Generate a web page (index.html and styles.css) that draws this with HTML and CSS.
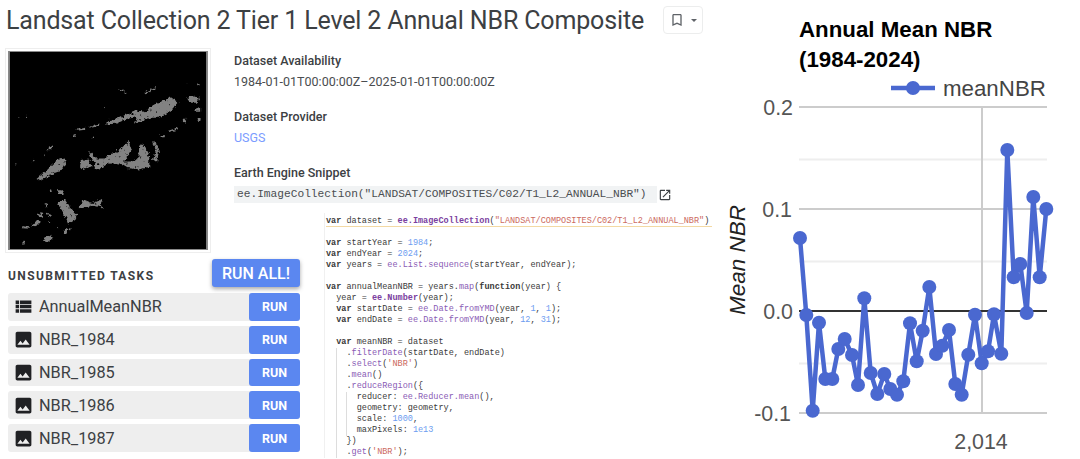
FILE: index.html
```html
<!DOCTYPE html>
<html lang="en">
<head>
    <meta charset="UTF-8">
    <title>Annual NBR Composite</title>
    <link rel="stylesheet" href="styles.css">
</head>
<body>
    <div class="page">
        <!-- Dataset side -->
        <main class="dataset">
            <header class="head">
                <h1>Landsat Collection 2 Tier 1 Level 2 Annual NBR Composite</h1>
                <button type="button" class="save">
                    <svg class="save-icon" viewBox="0 0 24 24"><path d="M17 3H7c-1.1 0-2 .9-2 2v16l7-3 7 3V5c0-1.1-.9-2-2-2zm0 15l-5-2.18L7 18V5h10v13z"/></svg>
                    <span class="caret"></span>
                </button>
            </header>

            <div class="body">
                <div class="thumb">
                    <svg viewBox="0 0 620 620" class="thumb-img">
                        <defs>
                            <filter id="soft" x="-5%" y="-5%" width="110%" height="110%">
                                <feTurbulence type="fractalNoise" baseFrequency="0.09" numOctaves="2" seed="4" result="noise"/>
                                <feDisplacementMap in="SourceGraphic" in2="noise" scale="16" xChannelSelector="R" yChannelSelector="G" result="shape"/>
                                <feTurbulence type="fractalNoise" baseFrequency="0.12" numOctaves="1" seed="9"/>
                                <feColorMatrix type="matrix" values="0 0 0 0 0  0 0 0 0 0  0 0 0 0 0  0 0 0 7 -1.500" result="holes"/>
                                <feComposite in="shape" in2="holes" operator="in"/>
                                <feGaussianBlur stdDeviation="1.500"/>
                            </filter>
                        </defs>
                        <rect width="620" height="620" fill="#000"/>
                        <g fill="#828282" filter="url(#soft)">
                            <polygon points="395,225 440,207 470,207 510,185 532,160 505,140 490,152 465,160 440,175 430,190 395,183 370,195 345,208 310,215 300,228 335,226 370,210 400,205"/>
                            <polygon points="555,145 575,135 600,145 590,160 565,160"/>
                            <polygon points="582,180 600,172 600,188 585,188"/>
                            <polygon points="425,127 462,110 464,114 428,130"/>
                            <polygon points="345,115 350,114 369,130 365,132"/>
                            <polygon points="210,245 238,238 238,245 212,248"/>
                            <polygon points="255,235 280,225 280,232 258,238"/>
                            <polygon points="118,305 135,293 137,302 120,310"/>
                            <polygon points="250,315 275,335 300,335 320,320 345,310 375,280 385,310 360,345 385,345 405,335 408,295 420,290 440,330 440,360 410,370 370,365 345,350 310,352 280,370 265,365 270,350 258,335"/>
                            <polygon points="225,340 250,335 258,360 230,368 222,360"/>
                            <polygon points="85,400 120,370 150,340 175,335 178,355 160,375 120,390 95,405"/>
                            <polygon points="150,435 170,435 170,450 152,450"/>
                            <polygon points="150,475 175,465 190,490 215,510 205,530 185,540 175,515 160,490"/>
                            <polygon points="215,495 235,465 260,475 295,462 285,480 300,495 275,482 245,487"/>
                            <polygon points="72,545 90,525 95,535 80,552"/>
                            <polygon points="40,548 65,552 62,556 42,555"/>
                            <polygon points="105,590 130,575 138,585 118,598"/>
                            <polygon points="110,475 122,478 118,487"/>
                            <polygon points="452,280 465,290 470,312 465,345 452,340 460,310"/>
                            <polygon points="475,262 490,262 488,268 476,268"/>
                            <polygon points="500,248 530,238 530,243 502,252"/>
                            <polygon points="545,210 556,210 555,222 546,220"/>
                            <polygon points="592,208 602,208 600,220 594,218"/>
                            <polygon points="85,505 105,510 100,520 88,515"/>
                            <polygon points="115,505 130,510 128,522"/>
                            <polygon points="170,560 182,555 180,572 172,572"/>
                            <circle cx="128" cy="436" r="4"/><circle cx="75" cy="340" r="4"/><circle cx="52" cy="204" r="3"/>
                            <circle cx="30" cy="205" r="2"/><circle cx="20" cy="352" r="2"/><circle cx="108" cy="325" r="3"/>
                            <circle cx="205" cy="263" r="4"/><circle cx="262" cy="268" r="3"/><circle cx="300" cy="175" r="2"/>
                            <circle cx="595" cy="105" r="4"/><circle cx="560" cy="100" r="2"/><circle cx="45" cy="600" r="3"/>
                            <circle cx="150" cy="555" r="3"/><circle cx="125" cy="535" r="3"/><circle cx="190" cy="558" r="3"/>
                        </g>
                    </svg>
                </div>

                <section class="details">
                    <h4>Dataset Availability</h4>
                    <p>1984-01-01T00:00:00Z–2025-01-01T00:00:00Z</p>
                    <h4>Dataset Provider</h4>
                    <p><a href="#">USGS</a></p>
                    <h4>Earth Engine Snippet</h4>
                    <div class="snippet">
                        <code>ee.ImageCollection("LANDSAT/COMPOSITES/C02/T1_L2_ANNUAL_NBR")</code>
                        <svg class="open-icon" viewBox="0 0 24 24"><path d="M19 19H5V5h7V3H5c-1.11 0-2 .9-2 2v14c0 1.1.89 2 2 2h14c1.1 0 2-.9 2-2v-7h-2v7zM14 3v2h3.59l-9.83 9.83 1.41 1.41L19 6.41V10h2V3h-7z"/></svg>
                    </div>
                </section>

                <section class="tasks">
                    <div class="tasks-head">
                        <h5>UNSUBMITTED TASKS</h5>
                        <button type="button" class="run-all">RUN ALL!</button>
                    </div>
                    <div class="task">
                        <svg class="task-icon" viewBox="0 0 24 24"><path d="M3 9h4V5H3v4zm0 5h4v-4H3v4zm5 0h13v-4H8v4zm0 5h13v-4H8v4zM3 19h4v-4H3v4zM8 5v4h13V5H8z"/></svg>
                        <span class="task-name">AnnualMeanNBR</span>
                        <button type="button" class="run">RUN</button>
                    </div>
                    <div class="task">
                        <svg class="task-icon" viewBox="0 0 24 24"><path d="M21 19V5c0-1.1-.9-2-2-2H5c-1.100 0-2 .9-2 2v14c0 1.100.9 2 2 2h14c1.100 0 2-.9 2-2zM8.500 13.500l2.500 3.010L14.500 12l4.500 6H5l3.500-4.500z"/></svg>
                        <span class="task-name">NBR_1984</span>
                        <button type="button" class="run">RUN</button>
                    </div>
                    <div class="task">
                        <svg class="task-icon" viewBox="0 0 24 24"><path d="M21 19V5c0-1.1-.9-2-2-2H5c-1.100 0-2 .9-2 2v14c0 1.100.9 2 2 2h14c1.100 0 2-.9 2-2zM8.500 13.500l2.500 3.010L14.500 12l4.500 6H5l3.500-4.500z"/></svg>
                        <span class="task-name">NBR_1985</span>
                        <button type="button" class="run">RUN</button>
                    </div>
                    <div class="task">
                        <svg class="task-icon" viewBox="0 0 24 24"><path d="M21 19V5c0-1.1-.9-2-2-2H5c-1.100 0-2 .9-2 2v14c0 1.100.9 2 2 2h14c1.100 0 2-.9 2-2zM8.500 13.500l2.500 3.010L14.500 12l4.500 6H5l3.500-4.500z"/></svg>
                        <span class="task-name">NBR_1986</span>
                        <button type="button" class="run">RUN</button>
                    </div>
                    <div class="task">
                        <svg class="task-icon" viewBox="0 0 24 24"><path d="M21 19V5c0-1.1-.9-2-2-2H5c-1.100 0-2 .9-2 2v14c0 1.100.9 2 2 2h14c1.100 0 2-.9 2-2zM8.500 13.500l2.500 3.010L14.500 12l4.500 6H5l3.500-4.500z"/></svg>
                        <span class="task-name">NBR_1987</span>
                        <button type="button" class="run">RUN</button>
                    </div>
                </section>

                <!-- Script editor -->
                <div class="code">
                    <div class="first"><b>var</b> dataset = <b class="ee">ee.ImageCollection</b>(<span class="str">"LANDSAT/COMPOSITES/C02/T1_L2_ANNUAL_NBR"</span>)</div>
                    <div></div>
                    <div><b>var</b> startYear = <span class="num">1984</span>;</div>
                    <div><b>var</b> endYear = <span class="num">2024</span>;</div>
                    <div><b>var</b> years = <span class="fn">ee.List.sequence</span>(startYear, endYear);</div>
                    <div></div>
                    <div><b>var</b> annualMeanNBR = years.<span class="fn">map</span>(<b>function</b>(year) {</div>
                    <div>  year = <b class="ee">ee.Number</b>(year);</div>
                    <div>  <b>var</b> startDate = <span class="fn">ee.Date.fromYMD</span>(year, <span class="num">1</span>, <span class="num">1</span>);</div>
                    <div>  <b>var</b> endDate = <span class="fn">ee.Date.fromYMD</span>(year, <span class="num">12</span>, <span class="num">31</span>);</div>
                    <div></div>
                    <div>  <b>var</b> meanNBR = dataset</div>
                    <div class="guide">
                        <div>  .<span class="fn">filterDate</span>(startDate, endDate)</div>
                        <div>  .<span class="fn">select</span>(<span class="str">'NBR'</span>)</div>
                        <div>  .<span class="fn">mean</span>()</div>
                        <div>  .<span class="fn">reduceRegion</span>({</div>
                        <div class="guide">
                            <div>  reducer: <span class="fn">ee.Reducer.mean</span>(),</div>
                            <div>  geometry: geometry,</div>
                            <div>  scale: <span class="num">1000</span>,</div>
                            <div>  maxPixels: <span class="num">1e13</span></div>
                        </div>
                        <div>  })</div>
                        <div>  .<span class="fn">get</span>(<span class="str">'NBR'</span>);</div>
                    </div>
                </div>
            </div>
        </main>

        <!-- Chart side -->
        <aside class="chart">
            <svg viewBox="720 0 360 459" class="chart-svg">
                <text class="chart-title" x="799" y="37">Annual Mean NBR</text>
                <text class="chart-title" x="799" y="66.500">(1984-2024)</text>

                <line class="leg" x1="891" y1="88" x2="935" y2="88"/>
                <circle class="dot" cx="913" cy="88" r="7"/>
                <text class="leg-text" x="943" y="96">meanNBR</text>

                <g class="minor">
                    <line x1="799" y1="159.500" x2="1047" y2="159.500"/>
                    <line x1="799" y1="261.500" x2="1047" y2="261.500"/>
                    <line x1="799" y1="363.500" x2="1047" y2="363.500"/>
                </g>
                <g class="major">
                    <line x1="799" y1="107" x2="1047" y2="107"/>
                    <line x1="799" y1="209" x2="1047" y2="209"/>
                    <line x1="799" y1="413" x2="1047" y2="413"/>
                    <line x1="982" y1="107" x2="982" y2="413"/>
                </g>
                <line class="zero" x1="799" y1="311" x2="1047" y2="311"/>

                <text class="tick" x="793" y="115">0.2</text>
                <text class="tick" x="792" y="217">0.1</text>
                <text class="tick" x="793" y="319">0.0</text>
                <text class="tick" x="791" y="421">-0.1</text>
                <text class="tick-x" x="981" y="449">2,014</text>
                <text class="axis-title" transform="translate(745 260) rotate(-90)">Mean NBR</text>

                <polyline class="series" points="800,238 806.300,315 812.700,410.700 819,322.700 825.300,379 832.300,379 838.300,349 844.700,339 852,355 858,385 864.300,298.300 870.700,373 877.300,394 884.300,374 890.300,389 897,394.700 903.300,381.300 910,323.300 916.700,361.300 922.700,330.700 929.300,287 936,354 942.300,345.700 949,330 955.300,384 961.700,394.700 968.300,354.700 975,314.700 981.700,363.300 988,351.300 994,314.300 1001.300,353.700 1007.300,150 1013.700,277.300 1020.300,264 1026.700,313 1033.300,197 1039.700,277.300 1046.300,209"/>
                <g class="dot">
                    <circle cx="800" cy="238" r="7"/><circle cx="806.300" cy="315" r="7"/><circle cx="812.700" cy="410.700" r="7"/>
                    <circle cx="819" cy="322.700" r="7"/><circle cx="825.300" cy="379" r="7"/><circle cx="832.300" cy="379" r="7"/>
                    <circle cx="838.300" cy="349" r="7"/><circle cx="844.700" cy="339" r="7"/><circle cx="852" cy="355" r="7"/>
                    <circle cx="858" cy="385" r="7"/><circle cx="864.300" cy="298.300" r="7"/><circle cx="870.700" cy="373" r="7"/>
                    <circle cx="877.300" cy="394" r="7"/><circle cx="884.300" cy="374" r="7"/><circle cx="890.300" cy="389" r="7"/>
                    <circle cx="897" cy="394.700" r="7"/><circle cx="903.300" cy="381.300" r="7"/><circle cx="910" cy="323.300" r="7"/>
                    <circle cx="916.700" cy="361.300" r="7"/><circle cx="922.700" cy="330.700" r="7"/><circle cx="929.300" cy="287" r="7"/>
                    <circle cx="936" cy="354" r="7"/><circle cx="942.300" cy="345.700" r="7"/><circle cx="949" cy="330" r="7"/>
                    <circle cx="955.300" cy="384" r="7"/><circle cx="961.700" cy="394.700" r="7"/><circle cx="968.300" cy="354.700" r="7"/>
                    <circle cx="975" cy="314.700" r="7"/><circle cx="981.700" cy="363.300" r="7"/><circle cx="988" cy="351.300" r="7"/>
                    <circle cx="994" cy="314.300" r="7"/><circle cx="1001.300" cy="353.700" r="7"/><circle cx="1007.300" cy="150" r="7"/>
                    <circle cx="1013.700" cy="277.300" r="7"/><circle cx="1020.300" cy="264" r="7"/><circle cx="1026.700" cy="313" r="7"/>
                    <circle cx="1033.300" cy="197" r="7"/><circle cx="1039.700" cy="277.300" r="7"/><circle cx="1046.300" cy="209" r="7"/>
                </g>
            </svg>
        </aside>
    </div>
</body>
</html>
```

FILE: styles.css
```css
* {
    margin: 0;
    padding: 0;
    box-sizing: border-box;
}
html, body {
    height: 459px;
    overflow: hidden;
    background: #fff;
}
body {
    font-family: Roboto, "Liberation Sans", sans-serif;
    color: #3c4043;
}
.page {
    display: grid;
    grid-template-columns: 720px 360px;
    height: 459px;
}

/* Title */
.head {
    display: flex;
    align-items: center;
    height: 48px;
    padding: 0 0 8px 6px;
    gap: 19px;
}
h1 {
    font-family: Roboto, sans-serif;
    font-size: 25px;
    font-weight: 400;
    letter-spacing: -0.150px;
    white-space: nowrap;
    color: #3c4043;
}
.save {
    display: flex;
    align-items: center;
    justify-content: center;
    gap: 6px;
    width: 40px;
    height: 28px;
    background: #fff;
    border: 1px solid #eceded;
    border-radius: 4px;
}
.save-icon {
    width: 16px;
    height: 16px;
    fill: #5f6368;
}
.caret {
    width: 0;
    height: 0;
    border-left: 3px solid transparent;
    border-right: 3px solid transparent;
    border-top: 3px solid #5f6368;
}

/* Main grid */
.body {
    display: grid;
    grid-template-columns: 229px 66px 25px 1fr;
    grid-template-rows: 165px 46px auto;
    padding-left: 5px;
}
.thumb {
    grid-column: 1;
    grid-row: 1 / 3;
    width: 206px;
    height: 205px;
    padding: 2px;
    border: 1px solid #eeeeee;
}
.thumb-img {
    display: block;
    width: 100%;
    height: 100%;
    border: 1px solid #8a8a8a;
}
.details {
    grid-column: 2 / 5;
    grid-row: 1;
    padding-top: 4px;
}
h4 {
    font-size: 12.500px;
    font-weight: 500;
    line-height: 18px;
    color: #3c4043;
}
.details p {
    font-size: 12.500px;
    line-height: 18px;
    margin: 3px 0 17px;
    color: #4a4d50;
}
.details a {
    color: #7b9cff;
    text-decoration: none;
}
.snippet {
    display: flex;
    align-items: center;
    margin-top: 4px;
}
.snippet code {
    display: block;
    width: 423px;
    height: 17px;
    padding-left: 3px;
    font-family: "Liberation Mono", monospace;
    font-size: 11.200px;
    line-height: 17px;
    background: #f1f3f4;
    color: #4a4d50;
}
.open-icon {
    width: 14px;
    height: 14px;
    margin-left: 1px;
    fill: #3c4043;
}

/* Tasks */
.tasks {
    grid-column: 1 / 3;
    grid-row: 3;
    margin-left: 3px;
}
.tasks-head {
    display: flex;
    justify-content: space-between;
    height: 34px;
}
h5 {
    margin-top: 10px;
    font-size: 12px;
    font-weight: 700;
    line-height: 14px;
    letter-spacing: 1.400px;
    color: #3c4043;
}
.run-all {
    width: 88px;
    height: 28px;
    border: none;
    border-radius: 3px;
    background: #5b87f0;
    color: #fff;
    font-family: inherit;
    font-size: 16px;
    font-weight: 500;
    box-shadow: 0 2px 4px rgba(0, 0, 0, 0.35);
}
.task {
    display: flex;
    align-items: center;
    height: 27.800px;
    margin-bottom: 5px;
    padding-left: 5px;
    background: #eeeeee;
    border-radius: 3px;
}
.task-icon {
    flex: none;
    width: 21px;
    height: 21px;
    fill: #202124;
}
.task-name {
    flex: 1;
    margin-left: 5px;
    font-size: 16.300px;
    color: #3c4043;
}
.run {
    width: 51px;
    height: 27.800px;
    border: none;
    border-radius: 3px;
    background: #5b87f0;
    color: #fff;
    font-family: inherit;
    font-size: 12.500px;
    font-weight: 700;
}

/* Code */
.code {
    grid-column: 4;
    grid-row: 2 / 4;
    padding: 2.500px 0 0 2px;
    margin-left: -1px;
    font-family: "Liberation Mono", monospace;
    font-size: 8.530px;
    line-height: 11px;
    color: #3a3a3a;
    box-shadow: inset 1px 0 #f0f0f0;
}
.code div {
    min-height: 11px;
    white-space: pre;
}
.code .guide {
    margin-left: 2ch;
    white-space: normal;
    box-shadow: inset 1px 0 #dddddd;
}
.code .first {
    width: 386px;
    box-shadow: inset 0 -1px #f3d9a4;
}
.ee {
    color: #7b3fa0;
}
.fn {
    color: #8a5bb5;
}
.str {
    color: #cc6a5e;
}
.num {
    color: #6c9cf0;
}

/* Chart */
.chart-svg {
    display: block;
    width: 360px;
    height: 459px;
}
.chart-title {
    font-family: "Liberation Sans", sans-serif;
    font-size: 22.300px;
    font-weight: 700;
    fill: #000;
}
.leg-text {
    font-family: "Liberation Sans", sans-serif;
    font-size: 22.300px;
    fill: #444;
}
.leg {
    stroke: #4a68d0;
    stroke-width: 4.500;
}
.dot {
    fill: #4a68d0;
}
.minor line {
    stroke: #eeeeee;
    stroke-width: 2;
}
.major line {
    stroke: #cccccc;
    stroke-width: 2;
}
.zero {
    stroke: #333;
    stroke-width: 2;
}
.tick, .tick-x, .axis-title {
    font-family: "Liberation Sans", sans-serif;
    font-size: 21.400px;
    fill: #555;
}
.tick {
    text-anchor: end;
}
.tick-x {
    text-anchor: middle;
}
.axis-title {
    text-anchor: middle;
    font-size: 22.500px;
    font-style: italic;
    fill: #222;
}
.series {
    fill: none;
    stroke: #4a68d0;
    stroke-width: 4.500;
    stroke-linejoin: round;
}
```
